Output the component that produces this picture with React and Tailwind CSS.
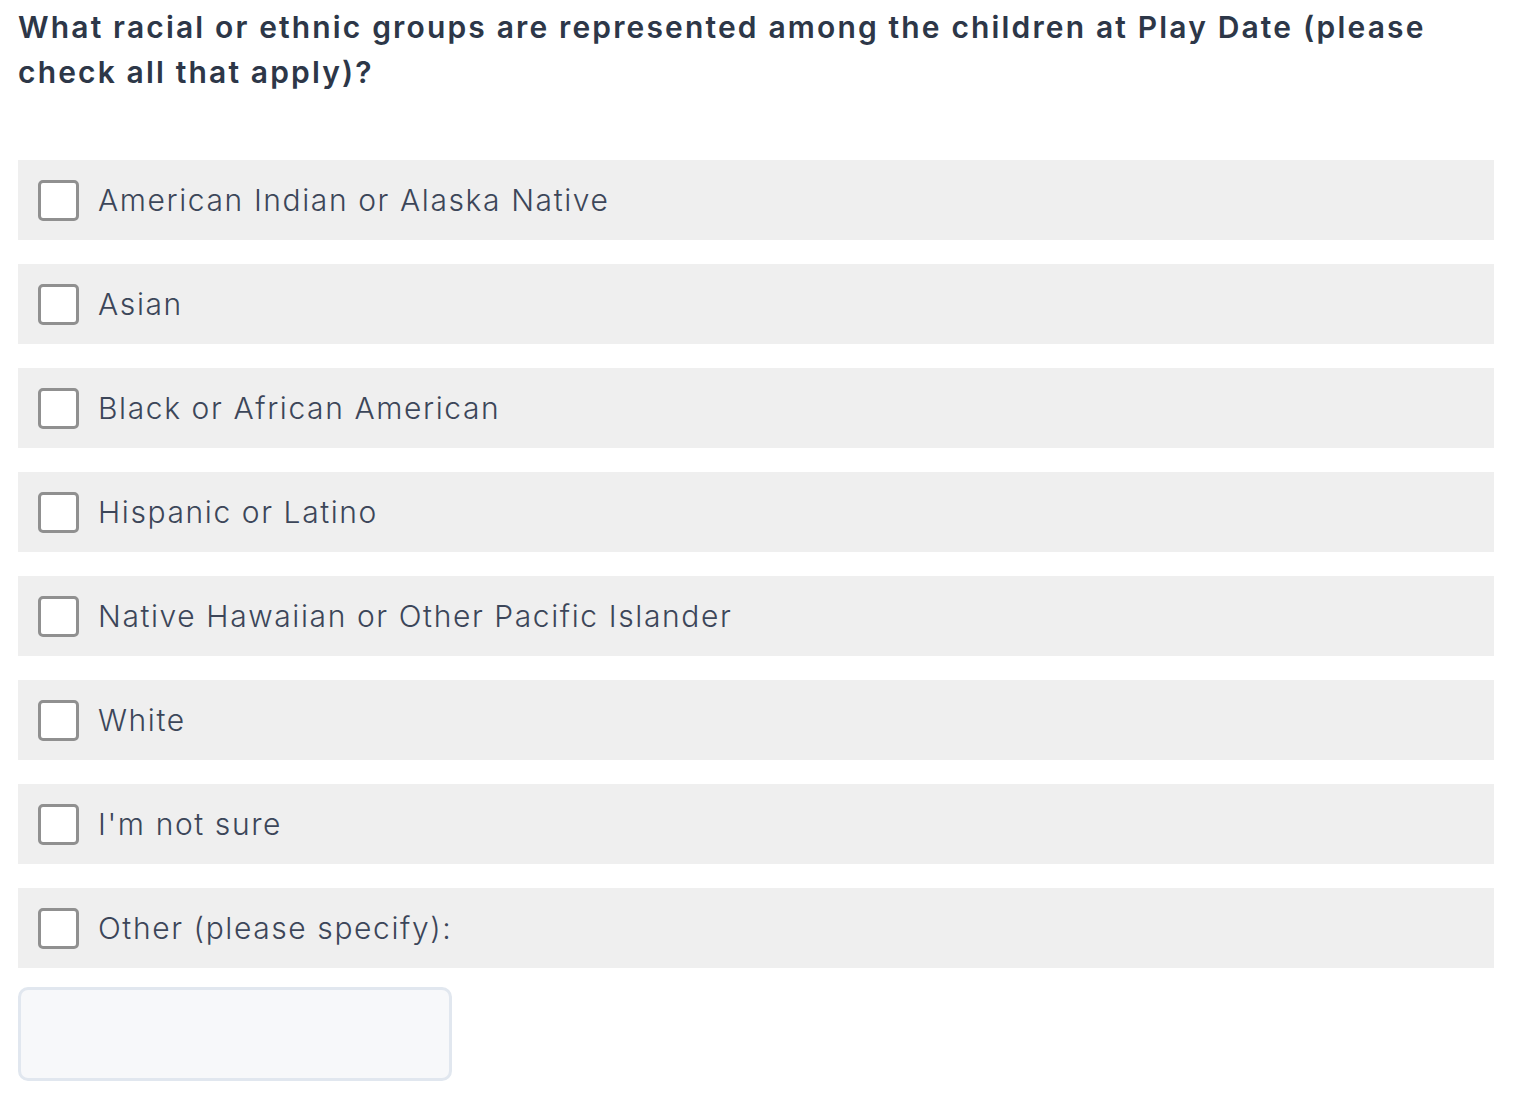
import React, { useState } from 'react';

const OPTIONS = [
  'American Indian or Alaska Native',
  'Asian',
  'Black or African American',
  'Hispanic or Latino',
  'Native Hawaiian or Other Pacific Islander',
  'White',
  "I'm not sure",
  'Other (please specify):',
];

export default function App() {
  const [checked, setChecked] = useState({});
  const [other, setOther] = useState('');

  return (
    <div className="min-h-screen bg-white px-[18px] pt-[5px] font-['Inter',sans-serif] text-[#2d3748]">
      <h1 className="w-[1476px] text-[30px] font-semibold leading-[45px] tracking-[2.15px]">
        What racial or ethnic groups are represented among the children at Play Date (please check all
        that apply)?
      </h1>

      <div className="mt-[65px] flex w-[1476px] flex-col gap-6">
        {OPTIONS.map((label) => (
          <label
            key={label}
            className="flex h-20 cursor-pointer items-center bg-[#efefef] pl-5"
          >
            <input
              type="checkbox"
              className="sr-only"
              checked={!!checked[label]}
              onChange={() => setChecked((c) => ({ ...c, [label]: !c[label] }))}
            />
            <span className="flex h-[41px] w-[41px] shrink-0 items-center justify-center rounded-[5px] border-[3px] border-[#909090] bg-white">
              {checked[label] && (
                <svg width="24" height="24" viewBox="0 0 24 24" fill="none" stroke="#4a5568" strokeWidth="3">
                  <path d="M5 12l5 5 9-10" />
                </svg>
              )}
            </span>
            <span className="ml-[19px] text-[30px] font-light tracking-[1.6px] text-[#3c4659]">{label}</span>
          </label>
        ))}
      </div>

      <input
        type="text"
        value={other}
        onChange={(e) => setOther(e.target.value)}
        className="mt-[19px] mb-8 block h-[94px] w-[434px] rounded-[10px] border-[3px] border-[#e1e7ef] bg-[#f7f8fa] px-4 text-[28px] outline-none"
      />
    </div>
  );
}
